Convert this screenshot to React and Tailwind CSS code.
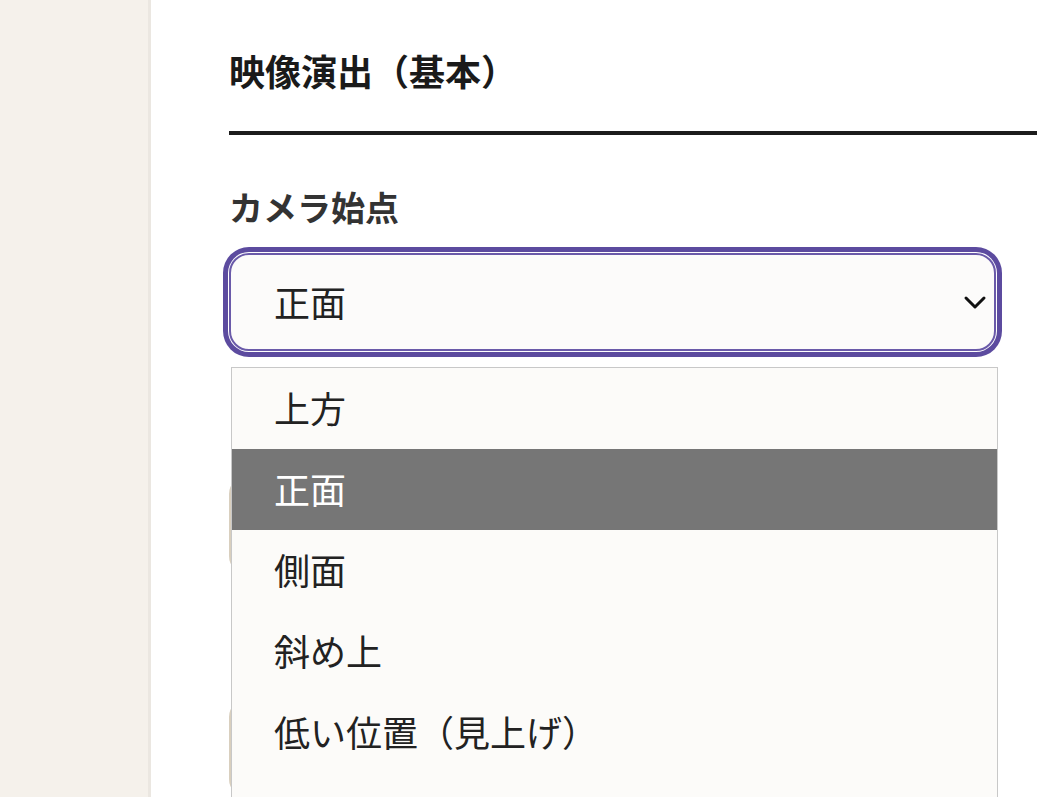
const font = { fontFamily: '"Noto Sans CJK JP", "Noto Sans", sans-serif' };

const options = ['上方', '正面', '側面', '斜め上', '低い位置（見上げ）', '被写体に密着'];

const Chevron = () => (
  <svg width="24" height="16" viewBox="0 0 24 16" fill="none" stroke="#111" strokeWidth="3" strokeLinecap="round" strokeLinejoin="round">
    <path d="M3 4l9 9 9-9" />
  </svg>
);

const Field = ({ label, children }) => (
  <div>
    <div className="text-[34px] leading-[40px] font-bold text-[#333]">{label}</div>
    <div className="mt-[26px]">{children}</div>
  </div>
);

const App = () => {
  const selected = '正面';
  return (
    <div className="h-screen w-full overflow-hidden flex bg-white" style={font}>
      <aside className="w-[151px] shrink-0 bg-[#f5f1eb] border-r-[3px] border-[#ebe7e1]" />
      <main className="flex-1 min-w-0 pl-[78px] pt-[47px]">
        <h2 className="text-[36px] leading-[46px] font-bold text-[#1a1a1a]">映像演出（基本）</h2>
        <div className="mt-[38px] h-[4px] bg-[#1c1c1c]" />
        <div className="mt-[52px] flex flex-col gap-[59px]">
          <Field label="カメラ始点">
            <div className="relative w-[767px]">
              <div className="h-[98px] flex items-center justify-between pl-[43px] pr-[7px] bg-[#fcfbfa] border-2 border-[#6a5aa9] rounded-[20px] shadow-[0_0_0_1px_#ffffff,0_0_0_6px_#5c4b9f]">
                <span className="text-[36px] text-[#222] pb-[2px]">{selected}</span>
                <Chevron />
              </div>
              <ul className="absolute z-10 left-[2px] top-[114px] w-[767px] bg-[#fcfbf9] border border-[#c8c8c8]">
                {options.map((o) => (
                  <li key={o}
                    className={'h-[81px] flex items-center pl-[42px] pb-[4px] text-[36px] ' +
                      (o === selected ? 'bg-[#767676] text-white' : 'text-[#222]')}>
                    {o}
                  </li>
                ))}
              </ul>
            </div>
          </Field>
          <Field label="カメラ終点">
            <div className="w-[767px] h-[98px] bg-[#fcfbfa] border-2 border-[#d9cfbe] rounded-[18px]" />
          </Field>
          <Field label="カメラ速度">
            <div className="w-[767px] h-[98px] bg-[#fcfbfa] border-2 border-[#d9cfbe] rounded-[18px]" />
          </Field>
        </div>
      </main>
    </div>
  );
};

export default App;
